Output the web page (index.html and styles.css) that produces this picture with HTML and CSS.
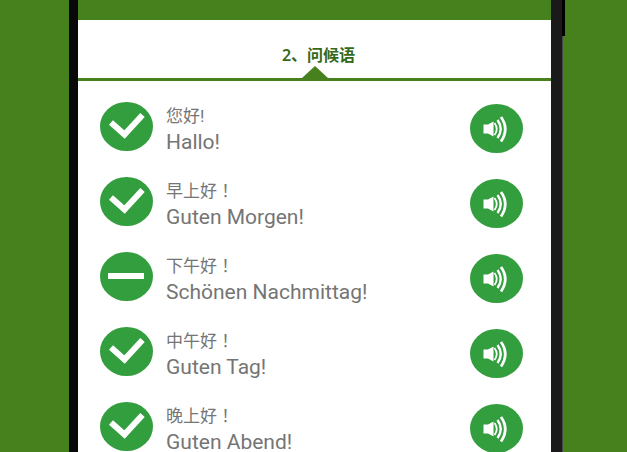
FILE: index.html
```
<!DOCTYPE html>
<html lang="zh">
<head>
  <meta charset="UTF-8" />
  <meta name="viewport" content="width=device-width, initial-scale=1.0">
  <title>问候语</title>
  <link rel="stylesheet" href="styles.css">
</head>
<body>
  <!-- shared icons -->
  <svg class="sprite" aria-hidden="true">
    <symbol id="check" viewBox="0 0 53 49" preserveAspectRatio="none">
      <ellipse cx="26.5" cy="24.5" rx="26.5" ry="24.5" fill="#339e3e"/>
      <path d="M11 20.5 L24.5 32.5 L42.5 13" fill="none" stroke="#fff" stroke-width="6"/>
    </symbol>
    <symbol id="minus" viewBox="0 0 53 49" preserveAspectRatio="none">
      <ellipse cx="26.5" cy="24.5" rx="26.5" ry="24.5" fill="#339e3e"/>
      <rect x="8" y="21" width="36" height="6" fill="#fff"/>
    </symbol>
    <symbol id="speaker" viewBox="0 0 53 49" preserveAspectRatio="none">
      <ellipse cx="26.5" cy="24.5" rx="26.5" ry="24.5" fill="#339e3e"/>
      <path d="M13.5 20.5 H18 L23.5 17.5 V32.5 L18 29.5 H13.5 Z" fill="#fff"/>
      <path d="M24.5 19 Q29 25 24.5 31" fill="none" stroke="#fff" stroke-width="1.8"/>
      <path d="M27.5 16 Q34 25 27.5 34" fill="none" stroke="#fff" stroke-width="2.4"/>
      <path d="M31 13 Q39.5 25 31 37.5" fill="none" stroke="#fff" stroke-width="2.8"/>
    </symbol>
  </svg>

  <div class="phone">
    <main class="screen">
      <div class="topbar"></div>
      <header class="heading">
        <h1>2、问候语</h1>
        <svg class="pointer" viewBox="0 0 26 12" aria-hidden="true"><path d="M0 12 L13 0 L26 12 Z"/></svg>
      </header>
      <ul class="phrases" lang="zh-Hant">
        <li class="phrase">
          <svg class="icon" role="img" aria-label="已学"><use href="#check"/></svg>
          <div class="text"><p class="zh">您好!</p><p class="de" lang="de">Hallo!</p></div>
          <button class="play" type="button" aria-label="Hallo!"><svg class="icon"><use href="#speaker"/></svg></button>
        </li>
        <li class="phrase">
          <svg class="icon" role="img" aria-label="已学"><use href="#check"/></svg>
          <div class="text"><p class="zh">早上好！</p><p class="de" lang="de">Guten Morgen!</p></div>
          <button class="play" type="button" aria-label="Guten Morgen!"><svg class="icon"><use href="#speaker"/></svg></button>
        </li>
        <li class="phrase">
          <svg class="icon" role="img" aria-label="未学"><use href="#minus"/></svg>
          <div class="text"><p class="zh">下午好！</p><p class="de" lang="de">Schönen Nachmittag!</p></div>
          <button class="play" type="button" aria-label="Schönen Nachmittag!"><svg class="icon"><use href="#speaker"/></svg></button>
        </li>
        <li class="phrase">
          <svg class="icon" role="img" aria-label="已学"><use href="#check"/></svg>
          <div class="text"><p class="zh">中午好！</p><p class="de" lang="de">Guten Tag!</p></div>
          <button class="play" type="button" aria-label="Guten Tag!"><svg class="icon"><use href="#speaker"/></svg></button>
        </li>
        <li class="phrase">
          <svg class="icon" role="img" aria-label="已学"><use href="#check"/></svg>
          <div class="text"><p class="zh">晚上好！</p><p class="de" lang="de">Guten Abend!</p></div>
          <button class="play" type="button" aria-label="Guten Abend!"><svg class="icon"><use href="#speaker"/></svg></button>
        </li>
      </ul>
    </main>
  </div>
</body>
</html>
```
FILE: styles.css
```
* { box-sizing: border-box; }
html, body {
  margin: 0; padding: 0; height: 100%;
  overflow: hidden;
}
body {
  background: #47811e;
  color: #757575;
  font-family: Roboto, "Noto Sans CJK TC", sans-serif;
}
.sprite {
  position: absolute; width: 0; height: 0;
}

/* phone body */
.phone {
  position: relative;
  min-height: 100%;
  margin: 0 64px 0 69px;
  padding: 0 11px 0 9px;
  background: linear-gradient(to right, #090909 9px, #1a1a1a 9px);
  border-right: 1px solid #484848;
}
/* side key */
.phone::after {
  content: "";
  position: absolute;
  top: 0; right: -3px;
  width: 3px; height: 36px;
  background: #000;
}
.screen {
  min-height: 100vh;
  background: #fff;
}
.topbar {
  height: 20px;
  background: #47811e;
}
.heading {
  display: flex; flex-direction: column;
  align-items: center; justify-content: flex-end;
  height: 61px;
  border-bottom: 3px solid #47811e;
}
h1 {
  margin: 0;
  padding-left: 8px;
  font-family: "Noto Sans", "Noto Sans CJK SC", sans-serif;
  font-size: 16px; line-height: 22px; font-weight: 600;
  color: #35691a;
}
.pointer {
  display: block;
  width: 26px; height: 12px;
  fill: #47811e;
}

/* phrase list */
.phrases {
  display: grid;
  row-gap: 24px;
  margin: 0;
  padding: 21px 28px 0 22px;
  list-style: none;
}
.phrase {
  display: flex;
  height: 51px;
}
.icon {
  display: block;
  flex: none;
  width: 53px; height: 49px;
}
.text {
  flex: 1;
  padding: 2px 0 0 13px;
}
.text p { margin: 0; }
.zh {
  font-size: 17px; line-height: 24px;
}
.de {
  font-size: 21px; line-height: 28px;
}
.play {
  align-self: flex-end;
  padding: 0;
  border: 0;
  background: none;
  cursor: pointer;
}
```
